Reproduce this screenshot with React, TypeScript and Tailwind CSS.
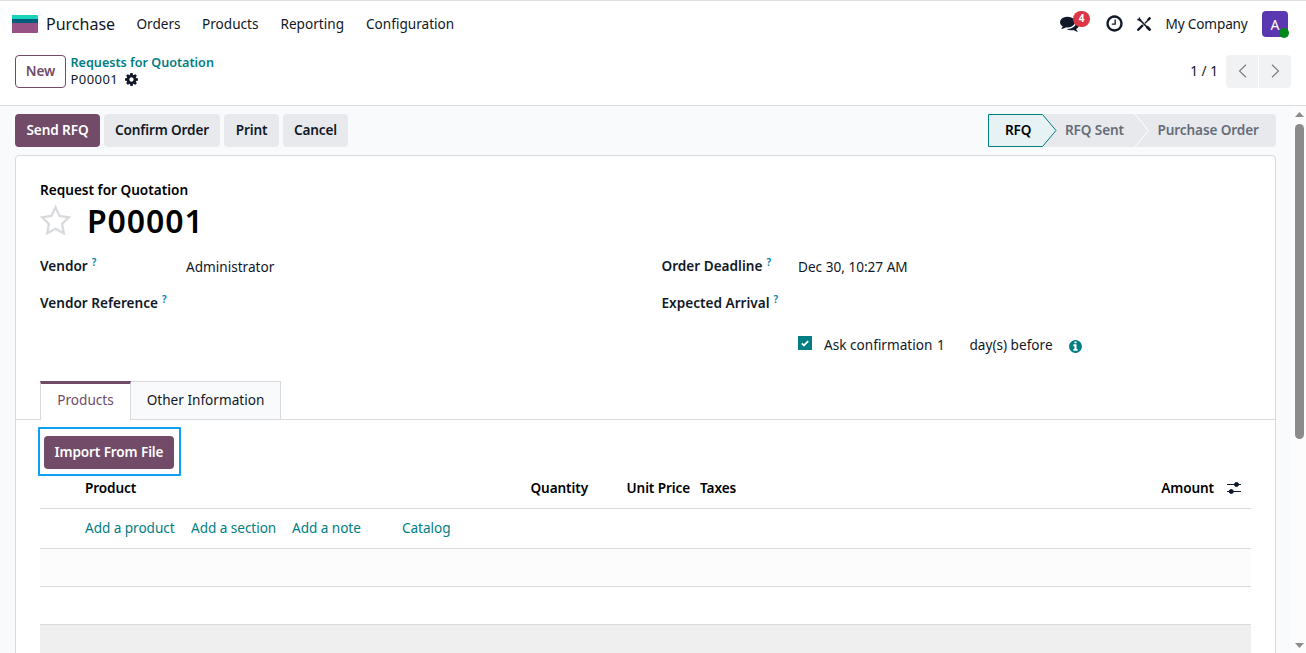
import { ReactNode } from "react";
import clsx from "clsx";

type IconProps = {
  path: string;
  className?: string;
};

const COMMENTS =
  "M1408 768q0 139-94 257t-256.5 186.5-353.5 68.5q-86 0-176-16-124 88-278 128-36 9-86 16h-3q-11 0-20.5-8t-11.5-21q-1-3-1-6.5t.5-6.5 2-6l2.5-5 3.5-5.5 4-5 4.5-5 4-4.5q5-6 23-25t26-29.5 22.5-29 25-38.5 20.5-44q-124-72-195-177t-71-224q0-139 94-257t256.5-186.5 353.5-68.5 353.5 68.5 256.5 186.5 94 257zm384 256q0 120-71 224.5t-195 176.5q10 24 20.5 44t25 38.5 22.5 29 26 29.5 23 25q1 1 4 4.5t4.5 5 4 5 3.5 5.5l2.5 5 2 6 .5 6.5-1 6.5q-3 14-13 22t-22 7q-50-7-86-16-154-40-278-128-90 16-176 16-271 0-472-132 58 4 88 4 161 0 309-45t264-129q125-92 192-212t67-254q0-77-23-152 129 71 204 178t75 230z";
const CLOCK =
  "M1024 544v448q0 14-9 23t-23 9h-320q-14 0-23-9t-9-23v-64q0-14 9-23t23-9h224v-352q0-14 9-23t23-9h64q14 0 23 9t9 23zm416 352q0-148-73-273t-198-198-273-73-273 73-198 198-73 273 73 273 198 198 273 73 273-73 198-198 73-273zm224 0q0 209-103 385.5t-279.5 279.5-385.5 103-385.5-103-279.5-279.5-103-385.5 103-385.5 279.5-279.5 385.5-103 385.5 103 279.5 279.5 103 385.5z";
const COG =
  "M1152 896q0-106-75-181t-181-75-181 75-75 181 75 181 181 75 181-75 75-181zm512-109v222q0 12-8 23t-20 13l-185 28q-19 54-39 91 35 50 107 138 10 12 10 25t-9 23q-27 37-99 108t-94 71q-12 0-26-9l-138-108q-44 23-91 38-16 136-29 186-7 28-36 28h-222q-14 0-24.5-8.5t-11.5-21.5l-28-184q-49-16-90-37l-141 107q-10 9-25 9-14 0-25-11-126-114-165-168-7-10-7-23 0-12 8-23 15-21 51-66.5t54-70.5q-27-50-41-99l-183-27q-13-2-21-12.5t-8-23.5v-222q0-12 8-23t19-13l186-28q14-46 39-92-40-57-107-138-10-12-10-24 0-10 9-23 26-36 98.5-107.5t94.5-71.5q13 0 26 10l138 107q44-23 91-38 16-136 29-186 7-28 36-28h222q14 0 24.5 8.5t11.5 21.5l28 184q49 16 90 37l142-107q9-9 24-9 13 0 25 10 129 119 165 170 7 8 7 22 0 12-8 23-15 21-51 66.5t-54 70.5q26 50 41 98l183 28q13 2 21 12.5t8 23.5z";
const INFO =
  "M1152 1376v-160q0-14-9-23t-23-9h-96v-512q0-14-9-23t-23-9h-320q-14 0-23 9t-9 23v160q0 14 9 23t23 9h96v320h-96q-14 0-23 9t-9 23v160q0 14 9 23t23 9h448q14 0 23-9t9-23zm-128-896v-160q0-14-9-23t-23-9h-192q-14 0-23 9t-9 23v160q0 14 9 23t23 9h192q14 0 23-9t9-23zm640 416q0 209-103 385.5t-279.5 279.5-385.5 103-385.5-103-279.5-279.5-103-385.5 103-385.5 279.5-279.5 385.5-103 385.5 103 279.5 279.5 103 385.5z";

const Icon = ({ path, className }: IconProps) => (
  <svg viewBox="0 0 1792 1792" fill="currentColor" className={className}>
    <path d={path} />
  </svg>
);

const Button = ({ children, primary, className }: { children: ReactNode; primary?: boolean; className?: string }) => (
  <button
    className={clsx(
      "h-[33px] shrink-0 whitespace-nowrap rounded font-semibold tracking-[-0.12px]",
      primary ? "bg-[#714B67] text-white" : "bg-[#e7e9ed] text-[#111827]",
      className
    )}
  >
    {children}
  </button>
);

const Label = ({ children }: { children: ReactNode }) => (
  <div className="flex whitespace-nowrap font-semibold text-[#111827]">
    {children}
    <span className="-mt-[4px] ml-[4px] text-[10px] text-[#0180a5]">?</span>
  </div>
);

const Navbar = () => (
  <header className="flex h-[47px] items-center border-t border-[#dee0e2] bg-white pl-3 pr-[18px] text-[#111827]">
    <svg width="26" height="18" viewBox="0 0 26 18">
      <path d="M0 0h25a1 1 0 0 1 1 1v4H0z" fill="#1ad3bb" />
      <path d="M0 4h26v5H0z" fill="#005e7a" />
      <path d="M0 8h26v9a1 1 0 0 1-1 1H0z" fill="#985184" />
    </svg>
    <span className="ml-2 w-[90.5px] text-[16px]">Purchase</span>
    <nav className="flex">
      <span className="w-[65.5px]">Orders</span>
      <span className="w-[78.5px]">Products</span>
      <span className="w-[85.5px]">Reporting</span>
      <span>Configuration</span>
    </nav>
    <div className="ml-auto flex items-center">
      <div className="relative mr-[26px] h-[19px] w-[19px]">
        <Icon path={COMMENTS} className="-mt-px h-[19px] w-[19px]" />
        <span className="absolute -top-[4px] left-[13px] flex h-4 w-[17px] items-center justify-center rounded-full bg-[#dc3545] text-[10px] font-bold text-white">
          4
        </span>
      </div>
      <Icon path={CLOCK} className="-mt-px mr-[12px] h-[19px] w-[19px]" />
      <svg width="16" height="16" viewBox="0 0 16 16" fill="none" stroke="currentColor" className="mr-[13.500px]">
        <path d="M4.6 4.6l7.6 7.6" strokeWidth="1.5" />
        <path d="M11.3 11.3l2.300 2.300" strokeWidth="2.800" strokeLinecap="round" />
        <path d="M1.3 3.5l1.9.2.3-2.2" strokeWidth="1.3" />
        <path d="M3.2 3.4l1.700 1.500" strokeWidth="2.400" />
        <path d="M2.100 13.800l4.300-4.100" strokeWidth="2.300" strokeLinecap="round" />
        <path d="M9 7.2l3-3" strokeWidth="1.4" />
        <path d="M11.8 4.2l2.6-2.5" strokeWidth="2.4" />
      </svg>
      <span className="w-[96.5px] whitespace-nowrap tracking-[-0.15px]">My Company</span>
      <div className="relative flex h-[26px] w-[26px] items-center justify-center rounded bg-[#5b37b1] text-[14px] text-white">
        A
        <span className="absolute -bottom-[1px] -right-[1px] h-[10px] w-[10px] rounded-full bg-[#008818]" />
      </div>
    </div>
  </header>
);

const ControlPanel = () => (
  <div className="flex h-[59px] items-start border-b border-[#d8dadd] bg-white pl-[15px] pr-[15px] pt-2 text-[#111827]">
    <button className="h-[33px] w-[51px] rounded border border-[#714B67] font-semibold text-[#714B67]">New</button>
    <div className="ml-[4.5px] flex flex-col leading-4">
      <span className="text-[12.6px] font-semibold text-[#017e84]">Requests for Quotation</span>
      <span className="flex items-center text-[13px] tracking-[0.45px]">
        P00001
        <Icon path={COG} className="ml-[6px] h-[15px] w-[15px]" />
      </span>
    </div>
    <div className="ml-auto flex items-center">
      <span className="mr-2">1 / 1</span>
      <button className="flex h-[33px] w-8 items-center justify-center rounded-l bg-[#f1f2f4] text-[#7d8088]">
        <svg width="9" height="14" viewBox="0 0 9 14" fill="none" stroke="currentColor" strokeWidth="1.2" className="-mt-px">
          <path d="M8 .7L1.5 7 8 13.3" />
        </svg>
      </button>
      <button className="ml-px flex h-[33px] w-8 items-center justify-center rounded-r bg-[#f1f2f4] text-[#7d8088]">
        <svg width="9" height="14" viewBox="0 0 9 14" fill="none" stroke="currentColor" strokeWidth="1.2" className="-mt-px">
          <path d="M1 .7L7.5 7 1 13.3" />
        </svg>
      </button>
    </div>
  </div>
);

const StatusBar = () => (
  <div className="relative ml-auto flex h-[33px] w-[288px] items-center rounded-r-sm bg-[#e7e9ed] font-semibold tracking-[-0.12px] text-[#666c79]">
    <svg width="288" height="33" viewBox="0 0 288 33" fill="none" className="absolute left-0 top-0">
      <path d="M.5.5h54L68 16.5 54.5 32.5H.5z" fill="#e6f2f3" stroke="#017e84" />
      <path d="M147 0l13.5 16.5L147 33" stroke="#fff" />
    </svg>
    <span className="relative ml-[17px] w-[60px] text-black">RFQ</span>
    <span className="relative w-[92.5px] whitespace-nowrap">RFQ Sent</span>
    <span className="relative whitespace-nowrap">Purchase Order</span>
  </div>
);

const Fields = () => (
  <div className="mt-[12px] flex h-[125px] px-6">
    <div className="grid w-[621.5px] grid-cols-[146px_1fr] grid-rows-[37px_37px] leading-5">
      <Label>Vendor</Label>
      <span className="mt-px">Administrator</span>
      <Label>Vendor Reference</Label>
    </div>
    <div className="grid grid-cols-[136.5px_1fr] grid-rows-[37px_40px_24px] leading-5">
      <Label>Order Deadline</Label>
      <span className="mt-px">Dec 30, 10:27 AM</span>
      <Label>Expected Arrival</Label>
      <span />
      <span />
      <div className="flex h-6 items-center whitespace-nowrap">
        <span className="mb-[4px] flex h-[14px] w-[14px] items-center justify-center bg-[#017e84]">
          <svg width="8" height="7" viewBox="0 0 8 7" fill="none" stroke="#fff" strokeWidth="1.8">
            <path d="M.8 3.4l2.100 2.100L7.200 1.200" />
          </svg>
        </span>
        <span className="ml-3 w-[113px]">Ask confirmation</span>
        <span className="w-[32.5px]">1</span>
        <span className="w-[98px]">day(s) before</span>
        <Icon path={INFO} className="mt-[3px] h-[15px] w-[15px] text-[#017e84]" />
      </div>
    </div>
  </div>
);

const Tabs = () => (
  <div className="flex h-[39px] text-[#111827]">
    <div className="w-6 border-b border-[#d8dadd]" />
    <div className="flex w-[91px] items-center justify-center border-x border-t-[3px] border-x-[#d8dadd] border-t-[#714B67] pb-[3px] text-[#714B67]">
      Products
    </div>
    <div className="flex w-[150px] items-center justify-center border-b border-r border-t border-[#d8dadd] bg-[#f9fafb]">
      Other Information
    </div>
    <div className="flex-1 border-b border-[#d8dadd]" />
  </div>
);

const OrderLines = () => (
  <div className="mx-6">
    <div className="flex h-[33px] items-center border-b border-[#d8dadd] pb-[8px] pl-[45px] pr-[9px] font-semibold tracking-[-0.1px] text-black">
      <span className="w-[445.5px]">Product</span>
      <span className="w-[96px]">Quantity</span>
      <span className="w-[73.5px]">Unit Price</span>
      <span>Taxes</span>
      <span className="ml-auto mr-3">Amount</span>
      <svg width="16" height="12" viewBox="0 0 16 12" fill="#111827" stroke="#111827">
        <path d="M1 2.5h14M1 9.5h14" strokeWidth="1" />
        <circle cx="10.5" cy="2.5" r="2" />
        <circle cx="5.3" cy="9.5" r="2" />
      </svg>
    </div>
    <div className="flex h-10 items-center border-b border-[#d8dadd] pl-[45px] tracking-[-0.05px] text-[#017e84]">
      <span className="w-[106px]">Add a product</span>
      <span className="w-[101px]">Add a section</span>
      <span className="w-[110px]">Add a note</span>
      <span>Catalog</span>
    </div>
    <div className="h-[38px] border-b border-[#d8dadd] bg-[#fcfcfc]" />
    <div className="h-[38px] border-b border-[#d8dadd]" />
    <div className="h-[38px] bg-[#efefef]" />
  </div>
);

const Scrollbar = () => (
  <div className="flex w-[15px] flex-col items-center bg-[#fcfcfc] pl-px">
    <svg width="9" height="5" viewBox="0 0 9 5" className="mt-[6px]">
      <path d="M0 5L4.5 0 9 5z" fill="#8b8b8b" />
    </svg>
    <div className="mt-[7px] h-[315px] w-[9px] rounded-full bg-[#8b8b8b]" />
    <svg width="9" height="5" viewBox="0 0 9 5" className="mb-[5px] mt-auto">
      <path d="M0 0l4.5 5L9 0z" fill="#8b8b8b" />
    </svg>
  </div>
);

export default function App() {
  return (
    <div className='flex h-[653px] w-[1306px] flex-col overflow-hidden bg-[#f9fafb] font-["Noto_Sans",sans-serif] text-[13.6px] text-[#111827]'>
      <Navbar />
      <ControlPanel />
      <div className="flex min-h-0 flex-1">
        <main className="flex-1 overflow-hidden pl-[15px] pr-[15px]">
          <div className="flex gap-1 pt-2">
            <Button primary className="w-[85px]">Send RFQ</Button>
            <Button className="w-[116px]">Confirm Order</Button>
            <Button className="w-[55px]">Print</Button>
            <Button className="w-[65px]">Cancel</Button>
            <StatusBar />
          </div>
          <section className="mt-2 h-[600px] rounded-t border border-[#d8dadd] bg-white pt-6">
            <div className="px-6 font-semibold leading-5 text-black">Request for Quotation</div>
            <div className="flex h-[44px] items-center px-6">
              <svg width="31" height="30" viewBox="0 0 31 30" fill="none" stroke="#d8dadd" strokeWidth="2.3" className="-mt-[5px]">
                <path d="M15.5 2.2l4.1 8.8 9.3 1.3-6.8 6.7 1.7 9.3-8.3-4.5-8.3 4.5 1.7-9.3-6.800-6.700 9.300-1.300z" />
              </svg>
              <h1 className="-mt-[2px] ml-4 text-[32px] font-semibold tracking-[0.9px] text-black">P00001</h1>
            </div>
            <Fields />
            <Tabs />
            <div className="ml-[22px] mt-[7px] flex h-[49px] w-[143px] items-center rounded-[1px] border-2 border-[#0d9ff2] pl-1 pt-px">
              <Button primary className="w-[130px]">Import From File</Button>
            </div>
            <OrderLines />
          </section>
        </main>
        <Scrollbar />
      </div>
    </div>
  );
}
